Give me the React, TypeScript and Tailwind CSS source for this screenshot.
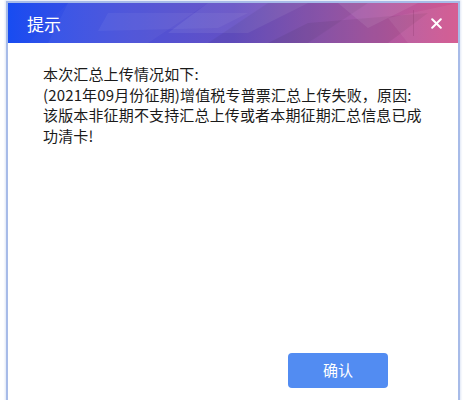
import React from "react";

export default function App() {
  const font = { fontFamily: '"Noto Sans CJK SC", "Microsoft YaHei", sans-serif' };
  return (
    <div className="w-[464px] h-[400px] bg-white overflow-hidden pt-[1px] pl-[6px]" style={font}>
      <div className="w-[454px] h-[420px] border-2 border-[#a7bbe8] shadow-[0_0_2px_1px_#dfe6f5] bg-white flex flex-col">
        <div className="relative h-[40px] shrink-0 overflow-hidden bg-gradient-to-r from-[#1a4ff0] via-[#6450c4] to-[#d3558d] flex items-center">
          <svg className="absolute inset-0" width="450" height="40" viewBox="0 0 450 40">
            <polygon points="60,0 200,0 140,40 40,40" fill="#ffffff" opacity="0.04" />
            <polygon points="200,0 300,0 240,30 160,30" fill="#ffffff" opacity="0.07" />
            <polygon points="260,0 360,0 300,40 200,40" fill="#000000" opacity="0.05" />
            <polygon points="300,20 420,10 380,40 260,40" fill="#000000" opacity="0.06" />
            <polygon points="330,0 410,0 360,25" fill="#ffffff" opacity="0.08" />
            <polygon points="380,15 450,0 450,40 400,40" fill="#ffffff" opacity="0.06" />
            <polygon points="100,10 240,10 210,25 90,28" fill="#ffffff" opacity="0.05" />
            <polygon points="0,0 60,0 20,40 0,40" fill="#0030ff" opacity="0.08" />
          </svg>
          <span className="relative ml-[19px] text-white text-[17px] leading-none">提示</span>
          <div className="relative ml-auto h-[26px] w-[45px] border-l border-[rgba(90,20,60,0.15)] flex items-center justify-center">
            <svg width="11" height="11" viewBox="0 0 11 11">
              <path d="M1.2 1.2 L9.8 9.8 M9.8 1.2 L1.2 9.8" stroke="#ffffff" strokeWidth="2" strokeLinecap="round" />
            </svg>
          </div>
        </div>
        <div className="pl-[35px] pt-[21px] text-[15px] leading-[20.5px] tracking-[0.15px] text-[#1a1a1a]">
          <div className="whitespace-nowrap">本次汇总上传情况如下:</div>
          <div className="whitespace-nowrap">(2021年09月份征期)增值税专普票汇总上传失败，原因:</div>
          <div className="whitespace-nowrap">该版本非征期不支持汇总上传或者本期征期汇总信息已成</div>
          <div className="whitespace-nowrap">功清卡!</div>
        </div>
        <button className="ml-[280px] mt-[207px] w-[100px] h-[35px] rounded-[4px] bg-[#528cf2] text-white text-[15px] flex items-center justify-center">
          确认
        </button>
      </div>
    </div>
  );
}
